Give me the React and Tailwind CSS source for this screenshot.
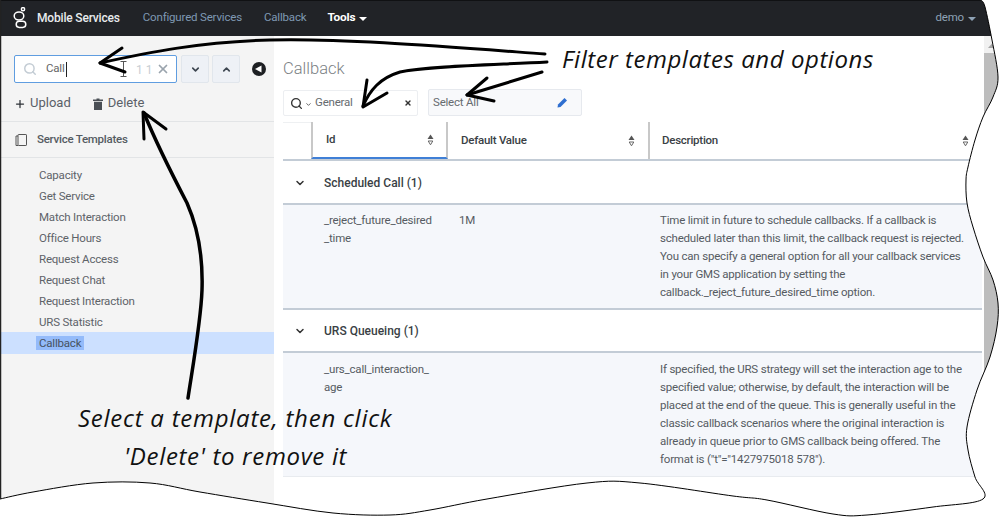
import React from "react";
import { Search, ChevronDown, ChevronUp, X, Plus } from "lucide-react";

const edgePts = [[981,0],[985,7],[992,40],[998,77],[993,97],[983,117],[975,140],[968,167],[966,180],[967,203],[973,227],[983,257],[993,280],[998,303],[997,327],[990,357],[977,390],[967,427],[968,450],[975,477],[983,499],[933,507],[867,515],[833,514],[767,500],[733,496],[640,483],[587,483],[487,499],[430,510],[390,515],[333,513],[267,503],[200,492],[150,483],[93,483],[33,492],[0,499]];

function smooth(pts) {
  let d = `M${pts[0][0]},${pts[0][1]}`;
  for (let i = 0; i < pts.length - 1; i++) {
    const p0 = pts[i - 1] || pts[i], p1 = pts[i], p2 = pts[i + 1], p3 = pts[i + 2] || p2;
    const c1 = [p1[0] + (p2[0] - p0[0]) / 6, p1[1] + (p2[1] - p0[1]) / 6];
    const c2 = [p2[0] - (p3[0] - p1[0]) / 6, p2[1] - (p3[1] - p1[1]) / 6];
    d += ` C${c1[0].toFixed(1)},${c1[1].toFixed(1)} ${c2[0].toFixed(1)},${c2[1].toFixed(1)} ${p2[0]},${p2[1]}`;
  }
  return d;
}
const edge = smooth(edgePts);

function Sort() {
  return (
    <svg width="7" height="12" viewBox="0 0 7 12" className="shrink-0">
      <path d="M3.5 0.5 L6.5 5 H0.5 Z" fill="#555" />
      <path d="M1.2 7 H5.8 L3.5 10.8 Z" fill="none" stroke="#666" strokeWidth="1" />
    </svg>
  );
}

function Caret({ color }) {
  return (
    <svg width="8" height="4" viewBox="0 0 8 4" className="ml-[4px] mt-[2px]">
      <path d="M0 0 H8 L4 4 Z" fill={color} />
    </svg>
  );
}

function Logo() {
  return (
    <svg width="14" height="22" viewBox="0 0 14 22" fill="none" stroke="#fff" strokeWidth="1.5" className="ml-[13px]">
      <circle cx="10" cy="2.2" r="1.6" />
      <ellipse cx="6" cy="9" rx="4.8" ry="4" />
      <rect x="3.2" y="14.2" width="9.6" height="6.2" rx="3.1" />
    </svg>
  );
}

const templates = ["Capacity","Get Service","Match Interaction","Office Hours","Request Access","Request Chat","Request Interaction","URS Statistic"];

function GroupRow({ title, h }) {
  return (
    <div className={`flex items-center ${h} bg-white border-b-2 border-[#c3ccd6] pt-[1px]`}>
      <ChevronDown size={12} strokeWidth={3} className="ml-[11px] text-[#333]" />
      <span className="ml-[18px] text-[12px] font-medium text-[#3a3f45]">{title}</span>
    </div>
  );
}

function DataRow({ id, value, h, border, pad, children }) {
  return (
    <div className={`flex ${h} ${pad} bg-[#f5f7fb] ${border} text-[11.5px] tracking-[-0.2px] leading-[18px] text-[#555b62]`}>
      <div className="w-[176px] pl-[41px] shrink-0">{id}</div>
      <div className="w-[201px] shrink-0">{value}</div>
      <div className="flex-1 whitespace-nowrap">{children}</div>
    </div>
  );
}

export default function App() {
  return (
    <div className="relative w-[1000px] h-[517px] overflow-hidden bg-white font-[Roboto,sans-serif]">
      <header className="flex items-center h-[36px] bg-[#212327] text-[11.5px] tracking-[-0.18px]">
        <Logo />
        <span className="ml-[10px] font-medium text-[#e8ebee] text-[12px]">Mobile Services</span>
        <span className="ml-[23px] text-[#7f99b3]">Configured Services</span>
        <span className="ml-[22px] text-[#7f99b3]">Callback</span>
        <span className="relative ml-[21px] flex items-center font-bold text-white text-[11.8px]">
          Tools<Caret color="#fff" />
          <span className="absolute left-0 right-0 top-[-17px] h-[2px] bg-[#3f7fd6]" />
        </span>
        <span className="ml-auto mr-[24px] flex items-center text-[#8ea2b5]">
          demo<Caret color="#8ea2b5" />
        </span>
      </header>

      <div className="flex h-[481px]">
        <aside className="w-[274px] shrink-0 bg-[#f4f4f4]">
          <div className="flex items-center h-[28px] mt-[19px] ml-[14px]">
            <div className="relative flex items-center w-[163px] h-[28px] bg-white border border-[#5f9de0] rounded-[2px] pl-[8px]">
              <Search size={14} strokeWidth={2.5} className="text-[#c3ccd4]" />
              <span className="ml-[9px] text-[11.5px] tracking-[-0.2px] text-[#666]">Call</span>
              <span className="w-px h-[15px] bg-[#222] ml-px" />
              <svg width="7" height="16" viewBox="0 0 7 16" fill="none" stroke="#555" strokeWidth="1" className="absolute left-[105px] top-[5px]">
                <path d="M0.5 0.5 H6.5 M3.5 0.5 V15.5 M0.5 15.5 H6.5" />
              </svg>
              <span className="absolute left-[121px] top-[5px] text-[12px] tracking-[3px] text-[#c8ced4]">11</span>
              <X size={14} strokeWidth={3} className="absolute right-[6px] text-[#9aa4ad]" />
            </div>
            <div className="flex items-center justify-center w-[28px] h-[28px] ml-[4px] bg-[#eef1f6] border border-[#e1e6ec] rounded-[2px]">
              <ChevronDown size={11} strokeWidth={3.5} className="text-[#3d4650]" />
            </div>
            <div className="flex items-center justify-center w-[28px] h-[28px] ml-[3px] bg-[#eef1f6] border border-[#e1e6ec] rounded-[2px]">
              <ChevronUp size={11} strokeWidth={3.5} className="text-[#3d4650]" />
            </div>
            <svg width="14" height="14" viewBox="0 0 14 14" className="ml-[12px]">
              <circle cx="7" cy="7" r="7" fill="#1d1f22" />
              <path d="M3 7 L9.5 3.5 V10.5 Z" fill="#fff" />
            </svg>
          </div>

          <div className="flex items-center h-[37px] mt-[2px] border-b border-[#e2e4e6] pl-[14px] text-[13px] text-[#5a6067]">
            <Plus size={12} strokeWidth={2.5} className="text-[#2c3136] mt-px" />
            <span className="ml-[4px]">Upload</span>
            <svg width="10" height="12" viewBox="0 0 10 12" className="ml-[22px] mt-[2px]">
              <path d="M3.5 0.5 H6.5 V1.5 H10 V3 H0 V1.5 H3.5 Z M1 3.8 H9 V12 H1 Z" fill="#4a4f55" />
            </svg>
            <span className="ml-[5px]">Delete</span>
          </div>

          <div className="flex items-center h-[36px] border-b border-[#e2e4e6] pl-[15px]">
            <svg width="12" height="12" viewBox="0 0 12 12" fill="none" stroke="#555" strokeWidth="1">
              <rect x="3" y="0.5" width="8.5" height="11" rx="0.6" />
              <path d="M3 2 H1 V11.5 H3" />
            </svg>
            <span className="ml-[10px] text-[11.5px] tracking-[-0.25px] font-medium text-[#555b62]">Service Templates</span>
          </div>

          <ul className="pt-[7px] text-[11.5px] tracking-[-0.2px] text-[#5e6369]">
            {templates.map((t) => (
              <li key={t} className="h-[21px] leading-[21px] pl-[39px]">{t}</li>
            ))}
            <li className="flex items-center h-[22px] -mt-px bg-[#cce0ff] pl-[36px]">
              <span className="px-[3px] h-[14px] leading-[14px] bg-[#94bbfa] text-[#46525f]">Callback</span>
            </li>
          </ul>
        </aside>

        <main className="flex-1 min-w-0 flex flex-col pl-[9px] pr-[2px]">
          <h1 className="mt-[22px] h-[22px] leading-[22px] text-[16.5px] font-light text-[#7b7f84]">Callback</h1>

          <div className="flex mt-[9px] h-[27px]">
            <div className="relative flex items-center w-[135px] mt-px h-[26px] bg-white border border-[#eceef1] rounded-[2px] pl-[6px]">
              <Search size={13} strokeWidth={2.5} className="text-[#333]" />
              <ChevronDown size={7} strokeWidth={3} className="ml-[2px] mt-[3px] text-[#555]" />
              <span className="ml-[3px] text-[11.5px] tracking-[-0.2px] text-[#666b70]">General</span>
              <X size={8} strokeWidth={4} className="absolute right-[5px] text-[#333]" />
            </div>
            <div className="relative flex items-center w-[154px] ml-[10px] bg-[#f8f9fb] border border-[#e6e9ee] rounded-[2px] pl-[4px] text-[11.5px] tracking-[-0.2px] text-[#666b70]">
              Select All
              <svg width="11" height="11" viewBox="0 0 11 11" className="absolute right-[13px]">
                <path d="M0.5 10.5 L1 7.5 L7.5 1 L10 3.5 L3.5 10 Z" fill="#2f6fd0" />
              </svg>
            </div>
          </div>

          <div className="flex h-[39px] mt-[6px] bg-white border-b-2 border-[#c3ccd6] text-[11.5px] tracking-[-0.25px] font-medium text-[#3a3f45]">
            <div className="w-[28px] border-t border-[#eef0f2]" />
            <div className="flex items-center justify-between w-[137px] border-l-2 border-r-2 border-[#c8c8c8] border-b-2 border-b-[#3f7fd6] pl-[13px] pr-[12px]">
              <span>Id</span><Sort />
            </div>
            <div className="flex items-center justify-between w-[202px] border-r-2 border-[#c8c8c8] pl-[13px] pr-[13px]">
              <span>Default Value</span><Sort />
            </div>
            <div className="flex items-center justify-between flex-1 pl-[12px] pr-[13px]">
              <span>Description</span><Sort />
            </div>
          </div>

          <GroupRow title="Scheduled Call (1)" h="h-[44px]" />
          <DataRow
            h="h-[105px]"
            pad="pt-[6px]"
            border="border-b-2 border-[#c3ccd6]"
            value="1M"
            id={<>_reject_future_desired<br />_time</>}
          >
            Time limit in future to schedule callbacks. If a callback is<br />
            scheduled later than this limit, the callback request is rejected.<br />
            You can specify a general option for all your callback services<br />
            in your GMS application by setting the<br />
            callback._reject_future_desired_time option.
          </DataRow>
          <GroupRow title="URS Queueing (1)" h="h-[43px]" />
          <DataRow
            h="h-[124px]"
            pad="pt-[7px]"
            border="border-b border-[#e8ebef]"
            value=""
            id={<>_urs_call_interaction_<br />age</>}
          >
            If specified, the URS strategy will set the interaction age to the<br />
            specified value; otherwise, by default, the interaction will be<br />
            placed at the end of the queue. This is generally useful in the<br />
            classic callback scenarios where the original interaction is<br />
            already in queue prior to GMS callback being offered. The<br />
            format is ("t"="1427975018 578").
          </DataRow>
        </main>

        <div className="w-[16px] shrink-0 bg-[#f1f1f1]">
          <svg width="10" height="6" viewBox="0 0 10 6" className="mx-auto mt-[7px]">
            <path d="M5 0.5 L9 5 H1 Z" fill="#a6a6a6" />
          </svg>
          <div className="mt-[4px] h-[380px] bg-[#bdbdbd]" />
        </div>
      </div>

      {/* torn paper edge and hand-drawn call-outs laid over the screenshot */}
      <svg width="1000" height="517" viewBox="0 0 1000 517" className="absolute left-0 top-0 pointer-events-none">
        <path d={`M0,0 H1000 V517 H0 Z ${edge} L0,0 Z`} fill="#fff" fillRule="evenodd" />
        <path d={`${edge} L0,0 Z`} fill="none" stroke="#000" strokeWidth="1" />
        <path d="M0.5,0 V499" stroke="#222" strokeWidth="1.5" />
        <g fill="none" stroke="#000" strokeWidth="3" strokeLinecap="round" strokeLinejoin="round">
          <path d="M545,54 C450,47 340,38 270,40 C200,42 150,52 100,63" />
          <path d="M122,48 L100,63 L125,72" />
          <path d="M547,62 C490,65 430,66 400,72 C380,78 370,90 363,106" />
          <path d="M367,80 L363,107 L387,93" />
          <path d="M542,72 L467,95" />
          <path d="M487,78 L467,95 L494,101" />
          <path d="M144,113 C155,140 175,180 187,203 C198,228 203,260 202,290 C201,320 193,365 188,398" strokeWidth="3.5" />
          <path d="M144,139 L143,112 L166,129" />
        </g>
      </svg>

      <div className="absolute left-[562px] top-[44px] text-[24px] leading-[30px] italic whitespace-nowrap text-[#111] font-['Open_Sans',sans-serif] tracking-[0.55px]">Filter templates and options</div>
      <div className="absolute left-[78px] top-[403px] text-[24px] leading-[30px] italic whitespace-nowrap text-[#111] font-['Open_Sans',sans-serif] tracking-[0.75px]">Select a template, then click</div>
      <div className="absolute left-[124px] top-[441px] text-[24px] leading-[30px] italic whitespace-nowrap text-[#111] font-['Open_Sans',sans-serif] tracking-[0.67px]">'Delete' to remove it</div>
    </div>
  );
}
